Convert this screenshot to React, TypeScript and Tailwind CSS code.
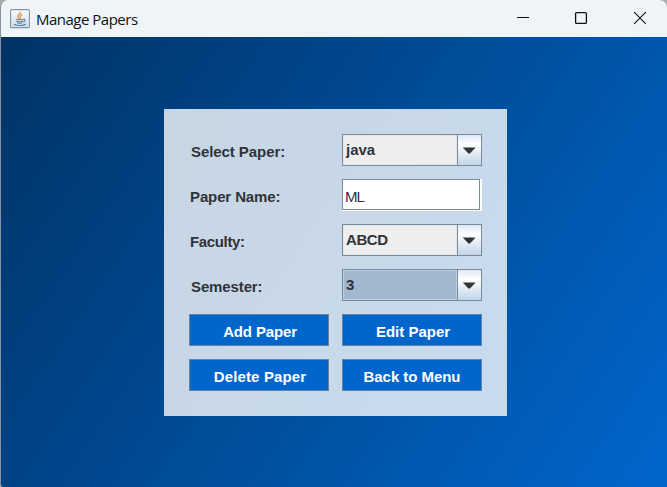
import React from "react";

function JavaIcon() {
  return (
    <svg width="20" height="20" viewBox="0 0 20 20" className="shrink-0">
      <defs>
        <linearGradient id="tile" x1="0" y1="0" x2="0" y2="1">
          <stop offset="0" stopColor="#fbfdfe" />
          <stop offset="1" stopColor="#cfdde8" />
        </linearGradient>
      </defs>
      <rect x="0.6" y="0.6" width="18.8" height="18" rx="1.2" fill="url(#tile)" stroke="#8195a8" strokeWidth="1.1" />
      <path d="M10.6 2.8c.8 1.7-3.4 2.9-2.9 4.8.2.9 1.4 1.5 1.6 2.6M12.3 5.5c-1.7.8-2.7 1.6-2.1 2.6.5.8.4 1.4-.4 2.1" fill="none" stroke="#e59a55" strokeWidth="1.4" />
      <path d="M5.8 10.7h7.4M6.4 12.2c1.2.8 5.1.8 6.5 0M7.2 13.7c1.3.6 3.6.6 5 0M4.2 15.2c1.5 1.7 9.5 1.7 11.5-.2M13 10.4c2.7-.8 2.8 1.5.3 2.5" fill="none" stroke="#64809f" strokeWidth="1.1" />
    </svg>
  );
}

function TitleBar() {
  return (
    <header className="flex h-[37px] shrink-0 items-center bg-[#eff4f7] pl-[9px]">
      <JavaIcon />
      <h1 className="ml-[6px] grow whitespace-nowrap font-['Open_Sans','Noto_Sans',sans-serif] text-[15px] leading-5 tracking-[-0.5px] text-[#111]">
        Manage Papers
      </h1>
      <svg width="160" height="37" viewBox="507 0 160 37" className="shrink-0" fill="none" stroke="#111">
        <path d="M517 17.5h12" />
        <rect x="575.6" y="12.6" width="10.8" height="10.8" rx="1" strokeWidth="1.3" />
        <path d="M634.2 12.2l11.6 11.6M645.8 12.2l-11.6 11.6" strokeWidth="1.1" />
      </svg>
    </header>
  );
}

function Label({ children, className }: { children: string; className: string }) {
  return <label className={"h-8 whitespace-nowrap pt-[3px] leading-[29px] text-[#303338] " + className}>{children}</label>;
}

function Combo({ value, selected = false, className = "" }: { value: string; selected?: boolean; className?: string }) {
  return (
    <div className="flex h-8 border border-[#7a8a99]">
      <div
        className={
          "grow border pl-[2px] leading-[27px] text-[#303338] " +
          (selected ? "border-[#b8cfe5] bg-[#a3b8cf] " : "border-[#e3e7eb] bg-[#eeeeee] ") +
          className
        }
      >
        {value}
      </div>
      <div className="flex w-6 items-center border-l border-[#7a8a99] bg-linear-to-b from-[#dde8f3] via-[#ffffff] via-30% to-[#c2d5e8] pl-[4px]">
        <svg width="14" height="8" viewBox="0 0 14 8" className="mt-[2px] shrink-0">
          <path d="M0.8 0.6H13.6L8 6.6H6.4Z" fill="#303338" />
        </svg>
      </div>
    </div>
  );
}

function Button({ children, className }: { children: string; className: string }) {
  return (
    <button className={"h-8 whitespace-nowrap border border-[#67839f] bg-[#0066cc] pt-[3px] text-center leading-[27px] text-white " + className}>
      {children}
    </button>
  );
}

export default function App() {
  return (
    <div className="h-[487px] w-[667px] overflow-hidden bg-[#a9adb0]">
      <div className="flex h-full flex-col overflow-hidden rounded-t-[8px] rounded-bl-[3px] border-l border-[#8393a3]">
        <TitleBar />
        <main className="grow bg-[linear-gradient(124deg,#003366,#0066cc)] pl-[163px] pt-[72px]">
          <form className="grid h-[307px] w-[343px] grid-cols-[140px_140px] content-start gap-[13px] bg-[rgba(255,255,255,0.784)] p-[25px] font-['Liberation_Sans',Arial,sans-serif] text-[15px] font-bold">
            <Label className="pl-[2px] tracking-[-0.07px]">Select Paper:</Label>
            <Combo value="java" />
            <Label className="pl-px tracking-[-0.12px]">Paper Name:</Label>
            <div className="h-8 border-b border-r-2 border-white">
              <div className="h-full border border-[#7a8a99] bg-white pl-[2px] pt-[2px] font-normal leading-[29px] tracking-[-0.9px] text-[#303338]">ML</div>
            </div>
            <Label className="pl-px tracking-[-0.35px]">Faculty:</Label>
            <Combo value="ABCD" className="tracking-[-0.4px]" />
            <Label className="pl-[2px] tracking-[-0.12px]">Semester:</Label>
            <Combo value="3" selected />
            <Button className="pl-[2px] tracking-[-0.15px]">Add Paper</Button>
            <Button className="pl-[2px]">Edit Paper</Button>
            <Button className="pl-[2px] tracking-[0.15px]">Delete Paper</Button>
            <Button className="tracking-[-0.05px]">Back to Menu</Button>
          </form>
        </main>
      </div>
    </div>
  );
}
